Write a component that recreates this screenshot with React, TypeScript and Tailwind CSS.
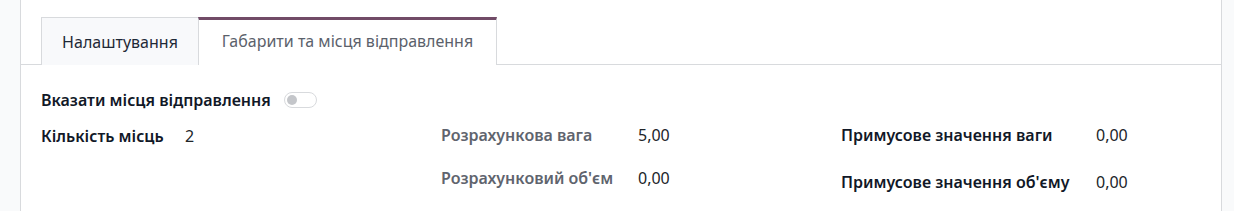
import React from "react";

export default function App() {
  const font = { fontFamily: '"Noto Sans", "Open Sans", sans-serif' };
  return (
    <div className="flex h-[211px] w-[1234px] bg-[#f9fafb] text-[16px] leading-[24px] text-[#212529]" style={font}>
      <div className="w-[20px] shrink-0" />
      <div className="flex w-[1202px] shrink-0 flex-col border-x border-[#d8dadd] bg-white">
        <div className="mt-[17px] flex border-b border-[#d8dadd] pl-[20px]">
          <div className="-mb-px flex h-[48px] w-[157px] items-center justify-center border-l border-t border-[#d8dadd] bg-[#f8f9fb] text-[16px] text-[#1f2937]">
            Налаштування
          </div>
          <div className="-mb-px flex h-[48px] w-[299px] items-center justify-center border-x border-t-[3px] border-x-[#d8dadd] border-t-[#714b67] bg-white pb-[3px] text-[16px] text-[#5b616b]">
            Габарити та місця відправлення
          </div>
        </div>
        <div className="flex flex-col px-[20px] pt-[23px]">
          <div className="flex items-center gap-[13px]">
            <span className="font-semibold text-[#111827]">Вказати місця відправлення</span>
            <span className="flex h-[16px] w-[33px] items-center rounded-full border border-[#d8dadd] bg-white pl-[2px]">
              <span className="h-[10px] w-[10px] rounded-full bg-[#c4c6ca]" />
            </span>
          </div>
          <div className="mt-[11px] grid grid-cols-[400px_400px_1fr]">
            <div className="flex pt-[1px]">
              <span className="w-[144px] font-semibold text-[#111827]">Кількість місць</span>
              <span>2</span>
            </div>
            <div className="flex flex-col gap-[19px]">
              <div className="flex">
                <span className="w-[197px] font-semibold text-[#5f646e]">Розрахункова вага</span>
                <span>5,00</span>
              </div>
              <div className="flex">
                <span className="w-[197px] font-semibold text-[#5f646e]">Розрахунковий об'єм</span>
                <span>0,00</span>
              </div>
            </div>
            <div className="flex flex-col gap-[23px]">
              <div className="flex">
                <span className="w-[255px] font-semibold text-[#111827]">Примусове значення ваги</span>
                <span>0,00</span>
              </div>
              <div className="flex">
                <span className="w-[255px] font-semibold text-[#111827]">Примусове значення об'єму</span>
                <span>0,00</span>
              </div>
            </div>
          </div>
        </div>
      </div>
    </div>
  );
}
